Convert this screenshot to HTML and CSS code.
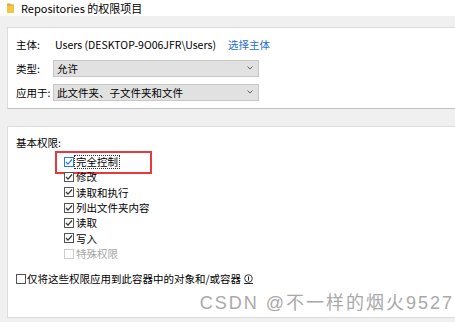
FILE: index.html
```html
<!DOCTYPE html>
<html lang="zh-CN">
<head>
    <meta charset="UTF-8">
    <meta name="viewport" content="width=device-width, initial-scale=1.0">
    <title>Repositories 的权限项目</title>
    <link rel="stylesheet" href="styles.css">
</head>
<body>
    <div class="titlebar">
        <svg class="folder" width="7" height="10" viewBox="0 0 7 10">
            <path d="M0 0.5 H3 L4 1.5 H7 V10 H0 Z" fill="#dca534"/>
            <path d="M0 2.5 H7 V10 H0 Z" fill="#f3c648"/>
        </svg>
        <span class="title">Repositories 的权限项目</span>
    </div>

    <div class="content">
        <section class="panel panel-top">
            <div class="row">
                <span class="label">主体:</span>
                <span class="value">Users (DESKTOP-9O06JFR\Users)</span>
                <span class="link">选择主体</span>
            </div>
            <div class="row">
                <span class="label">类型:</span>
                <div class="select">
                    <span>允许</span>
                    <svg width="6" height="4" viewBox="0 0 6 4"><polyline points="0.5,0.5 3,3 5.5,0.5" fill="none" stroke="#606060" stroke-width="1"/></svg>
                </div>
            </div>
            <div class="row">
                <span class="label">应用于:</span>
                <div class="select">
                    <span>此文件夹、子文件夹和文件</span>
                    <svg width="6" height="4" viewBox="0 0 6 4"><polyline points="0.5,0.5 3,3 5.5,0.5" fill="none" stroke="#606060" stroke-width="1"/></svg>
                </div>
            </div>
        </section>

        <section class="panel panel-perm">
            <div class="perm-title">基本权限:</div>
            <ul class="perm-list">
                <li class="check focused">
                    <svg class="box" width="10" height="10" viewBox="0 0 10 10"><rect x="0.5" y="0.5" width="9" height="9" fill="#fff" stroke="#2a7fd4"/><polyline points="2,5 4,7.2 8,2.5" fill="none" stroke="#2a7fd4" stroke-width="1.2"/></svg>
                    <span class="focus">完全控制</span>
                    <span class="mark"></span>
                </li>
                <li class="check">
                    <svg class="box" width="10" height="10" viewBox="0 0 10 10"><rect x="0.5" y="0.5" width="9" height="9" fill="#fff" stroke="#555"/><polyline points="2,5 4,7.2 8,2.5" fill="none" stroke="#333" stroke-width="1.2"/></svg>
                    <span>修改</span>
                </li>
                <li class="check">
                    <svg class="box" width="10" height="10" viewBox="0 0 10 10"><rect x="0.5" y="0.5" width="9" height="9" fill="#fff" stroke="#555"/><polyline points="2,5 4,7.2 8,2.5" fill="none" stroke="#333" stroke-width="1.2"/></svg>
                    <span>读取和执行</span>
                </li>
                <li class="check">
                    <svg class="box" width="10" height="10" viewBox="0 0 10 10"><rect x="0.5" y="0.5" width="9" height="9" fill="#fff" stroke="#555"/><polyline points="2,5 4,7.2 8,2.5" fill="none" stroke="#333" stroke-width="1.2"/></svg>
                    <span>列出文件夹内容</span>
                </li>
                <li class="check">
                    <svg class="box" width="10" height="10" viewBox="0 0 10 10"><rect x="0.5" y="0.5" width="9" height="9" fill="#fff" stroke="#555"/><polyline points="2,5 4,7.2 8,2.5" fill="none" stroke="#333" stroke-width="1.2"/></svg>
                    <span>读取</span>
                </li>
                <li class="check">
                    <svg class="box" width="10" height="10" viewBox="0 0 10 10"><rect x="0.5" y="0.5" width="9" height="9" fill="#fff" stroke="#555"/><polyline points="2,5 4,7.2 8,2.5" fill="none" stroke="#333" stroke-width="1.2"/></svg>
                    <span>写入</span>
                </li>
                <li class="check disabled">
                    <svg class="box" width="10" height="10" viewBox="0 0 10 10"><rect x="0.5" y="0.5" width="9" height="9" fill="#fff" stroke="#cccccc"/></svg>
                    <span>特殊权限</span>
                </li>
            </ul>

            <div class="check apply">
                <svg class="box" width="10" height="10" viewBox="0 0 10 10"><rect x="0.5" y="0.5" width="9" height="9" fill="#fff" stroke="#555"/></svg>
                <span>仅将这些权限应用到此容器中的对象和/或容器</span>
                <svg class="info" width="9" height="10" viewBox="0 0 9 10"><circle cx="4.5" cy="4.5" r="3.8" fill="none" stroke="#222" stroke-width="0.9"/><line x1="4.5" y1="2.4" x2="4.5" y2="6.6" stroke="#222" stroke-width="1"/><line x1="0" y1="9.5" x2="9" y2="9.5" stroke="#222" stroke-width="1"/></svg>
            </div>
        </section>
    </div>

    <div class="watermark">CSDN @不一样的烟火9527</div>
</body>
</html>
```

FILE: styles.css
```css
*{
    margin: 0;
    padding: 0;
}
body{
    width: 455px;
    height: 322px;
    overflow: hidden;
    position: relative;
    background-color: #f0f0f0;
    font-family: "Noto Sans CJK SC", "Noto Sans", sans-serif;
    font-size: 10.5px;
    color: #000;
}

/* title bar */
.titlebar{
    height: 16px;
    background-color: #fff;
    display: flex;
    align-items: center;
    padding-left: 7px;
    gap: 7px;
}
.title{
    font-size: 11px;
}

.content{
    padding: 11px 0 0 7px;
}
.panel{
    background-color: #fff;
    border: 1px solid #dcdcdc;
    margin-right: -3px;
    box-sizing: border-box;
}

/* top panel */
.panel-top{
    height: 82px;
    padding: 4px 0 4px 8px;
    border-bottom-color: #c2c2c2;
}
.row{
    height: 24px;
    display: flex;
    align-items: center;
}
.label{
    width: 37px;
}
.value{
    margin-left: 2px;
}
.link{
    margin-left: 12px;
    color: #1f6fd0;
}
.select{
    width: 206px;
    height: 17px;
    box-sizing: border-box;
    border: 1px solid #c8c8c8;
    background-color: #e1e1e1;
    display: flex;
    align-items: center;
    justify-content: space-between;
    padding: 0 5px 0 3px;
}

/* permissions panel */
.panel-perm{
    margin-top: 17px;
    height: 192px;
    padding: 8px 0 0 8px;
}
.perm-title{
    line-height: 16px;
}
.perm-list{
    list-style: none;
    margin: 3px 0 0 48px;
}
.check{
    height: 15.33px;
    display: flex;
    align-items: center;
    gap: 2px;
    position: relative;
}
.check .box{
    flex: none;
}
.focus{
    border: 1px dotted #333;
    line-height: 12px;
    padding: 0 1px;
    margin-left: -2px;
}
.mark{
    position: absolute;
    left: -9px;
    top: -3px;
    width: 97px;
    height: 23px;
    box-sizing: border-box;
    border: 2px solid #e8383d;
}
.disabled{
    color: #a6a6a6;
}
.apply{
    margin-top: 10px;
    gap: 1px;
}
.info{
    margin-left: 2px;
}

.watermark{
    position: absolute;
    right: 1px;
    top: 288px;
    font-family: "Liberation Sans", "Noto Sans CJK SC", sans-serif;
    font-size: 18px;
    letter-spacing: 2px;
    color: #a9a9a9;
}
```
